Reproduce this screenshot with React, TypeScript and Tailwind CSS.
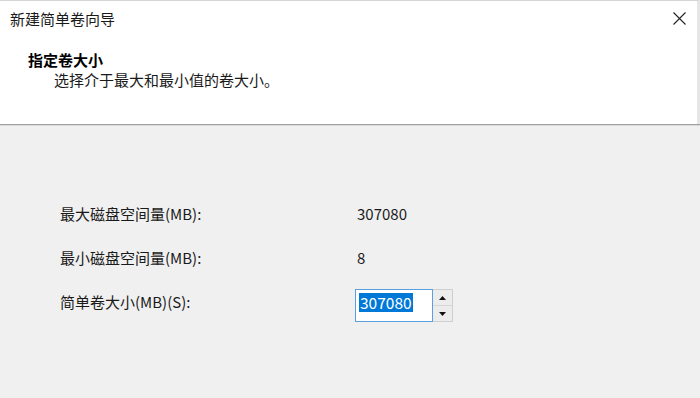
const font = "font-['Microsoft_YaHei','Noto_Sans_CJK_SC',sans-serif]";

const Row = ({ label, value }: { label: string; value: string }) => (
  <div className="flex items-center h-5">
    <span className="w-[297px]">{label}</span>
    <span>{value}</span>
  </div>
);

const Arrow = ({ up }: { up?: boolean }) => (
  <svg width="7" height="4" viewBox="0 0 7 4">
    <path d={up ? "M0 4 L3.5 0 L7 4 Z" : "M0 0 L3.5 4 L7 0 Z"} fill="#111" />
  </svg>
);

const App = () => {
  return (
    <div
      className={`${font} w-[700px] h-[398px] overflow-hidden bg-[#f0f0f0] text-[15px] leading-5 text-[#1a1a1a]`}
    >
      <div className="h-[124px] bg-white border-t border-[#d4d4d4] border-r-[3px] border-r-[#e6e6e6]">
        <div className="flex items-center justify-between h-[35px] pl-[10px] pr-[11px]">
          <span>新建简单卷向导</span>
          <svg width="13" height="13" viewBox="0 0 13 13">
            <path d="M0.5 0.5 L12.5 12.5 M12.5 0.5 L0.5 12.5" stroke="#222" strokeWidth="1.1" />
          </svg>
        </div>
        <div className="pl-[28px] mt-[14px]">
          <div className="font-bold text-black">指定卷大小</div>
          <div className="pl-[26px]">选择介于最大和最小值的卷大小。</div>
        </div>
      </div>
      <div className="h-px bg-[#a0a0a0]" />
      <div className="h-px bg-[#dadada]" />

      <div className="pl-[60px] pt-[78px] flex flex-col">
        <Row label="最大磁盘空间量(MB):" value="307080" />
        <div className="mt-[24px]">
          <Row label="最小磁盘空间量(MB):" value="8" />
        </div>
        <div className="mt-[21px] flex items-start">
          <span className="w-[295px] pt-[3px]">简单卷大小(MB)(S):</span>
          <div className="flex h-[33px]">
            <div className="w-[78px] bg-white border border-[#5a9fe0] flex items-start pl-[3px] pt-[3px]">
              <span className="bg-[#0078d7] text-white px-[1px] leading-[19px] text-[15.5px]">307080</span>
            </div>
            <div className="w-[20px] flex flex-col border border-[#cfcfcf] border-l-0">
              <div className="flex-1 flex items-center justify-center bg-[#ececec] border-b border-[#d6d6d6]">
                <Arrow up />
              </div>
              <div className="flex-1 flex items-center justify-center bg-[#ececec]">
                <Arrow />
              </div>
            </div>
          </div>
        </div>
      </div>
    </div>
  );
};

export default App;
